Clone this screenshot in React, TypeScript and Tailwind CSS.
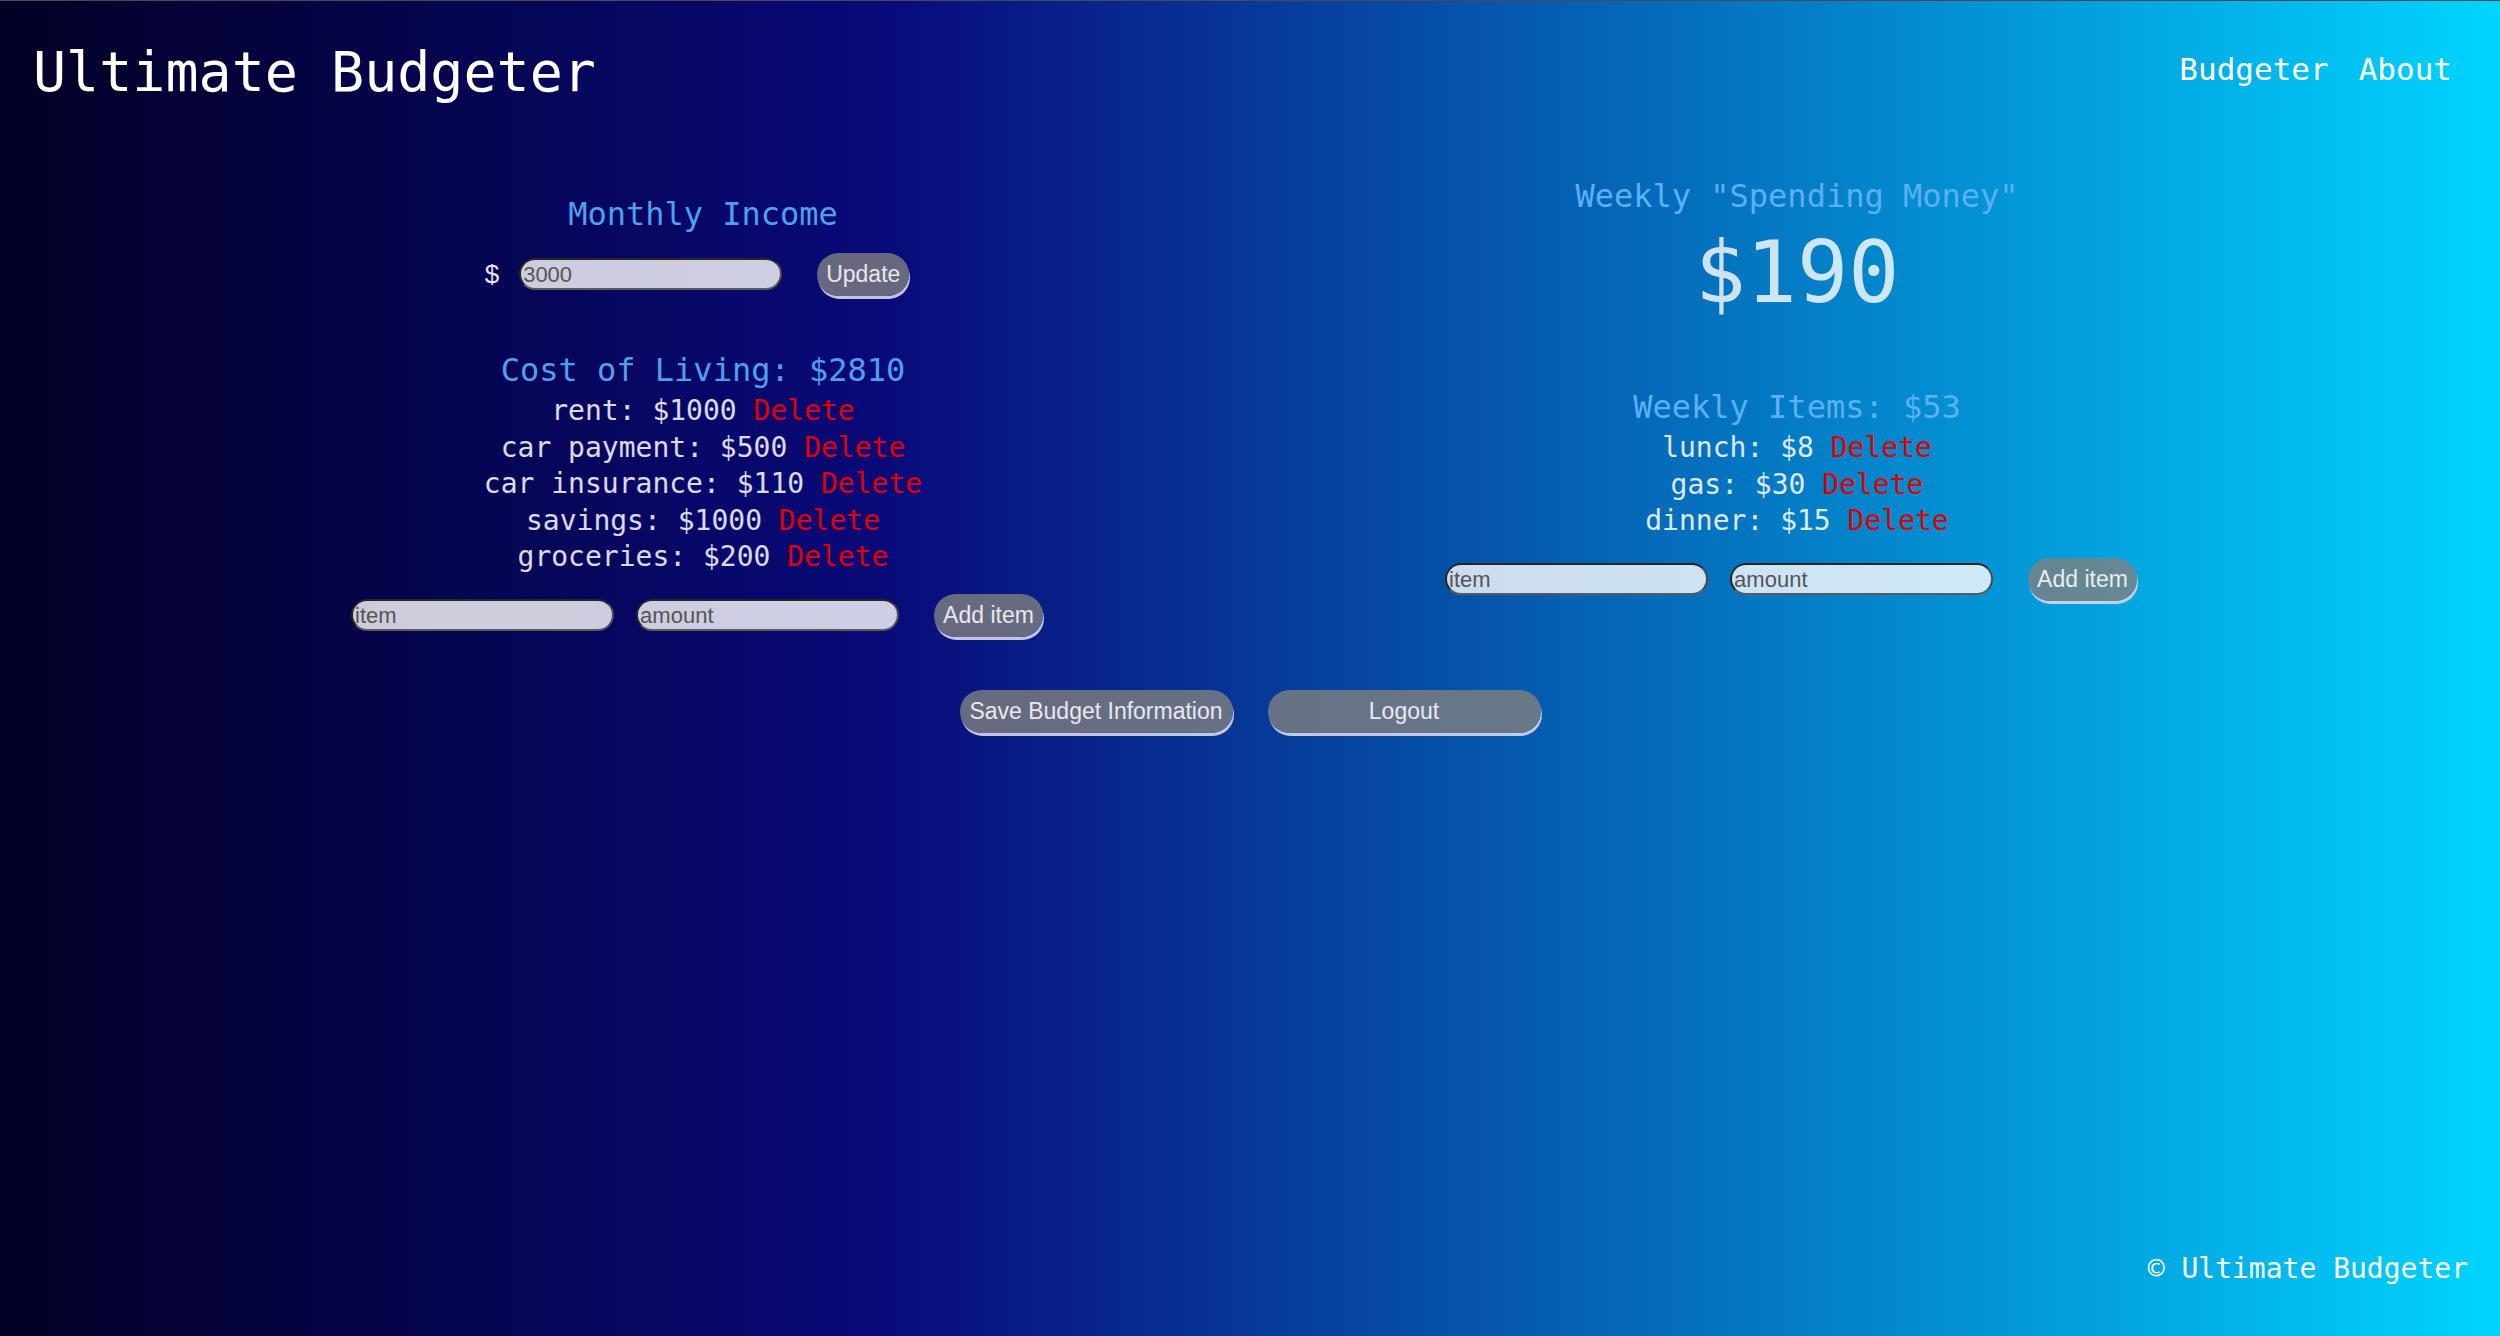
import React from 'react';

const mono = { fontFamily: '"DejaVu Sans Mono", "Liberation Mono", monospace' };
const sans = { fontFamily: '"Liberation Sans", Arial, sans-serif' };

interface Item {
  name: string;
  amount: number;
}

const costs: Item[] = [
  { name: 'rent', amount: 1000 },
  { name: 'car payment', amount: 500 },
  { name: 'car insurance', amount: 110 },
  { name: 'savings', amount: 1000 },
  { name: 'groceries', amount: 200 },
];

const weekly: Item[] = [
  { name: 'lunch', amount: 8 },
  { name: 'gas', amount: 30 },
  { name: 'dinner', amount: 15 },
];

const Field: React.FC<{ placeholder?: string; value?: string }> = ({ placeholder, value }) => (
  <input
    style={sans}
    readOnly
    placeholder={placeholder}
    value={value}
    className="w-[263px] h-[32px] rounded-full bg-white/80 pl-[2px] text-[22px] text-[#555] placeholder:text-[#555] border-2 border-[#262626] border-b-[#5a5a5a] border-r-[#4a4a4a] outline-none"
  />
);

const Btn: React.FC<{ children: React.ReactNode; className?: string }> = ({ children, className = '' }) => (
  <button
    style={sans}
    className={`h-[43px] rounded-full bg-[#808080]/80 px-[9px] text-[23px] text-white/85 shadow-[1px_3px_0_0_rgba(215,215,240,0.9)] ${className}`}
  >
    {children}
  </button>
);

const ItemList: React.FC<{ items: Item[] }> = ({ items }) => (
  <ul className="mt-[3px] text-[28px] leading-[36.6px] text-white/85">
    {items.map((it) => (
      <li key={it.name}>
        {it.name}: ${it.amount} <span className="text-[#e00000]">Delete</span>
      </li>
    ))}
  </ul>
);

const AddRow: React.FC = () => (
  <div className="mt-[18px] mr-[12px] flex items-center justify-center">
    <Field placeholder="item" />
    <div className="w-[22px]" />
    <Field placeholder="amount" />
    <div className="w-[35px]" />
    <Btn>Add item</Btn>
  </div>
);

export default function App() {
  return (
    <div
      style={mono}
      className="min-h-screen flex flex-col border-t border-[#4a4a55] bg-[linear-gradient(90deg,rgba(2,0,36,1)_0%,rgba(9,9,121,1)_35%,rgba(0,212,255,1)_100%)] text-white"
    >
      <header className="flex items-center justify-between pt-[39px] pl-[33px] pr-[48px]">
        <h1 className="text-[55px] leading-[64px]">Ultimate Budgeter</h1>
        <nav className="flex gap-[30px] text-[31px] leading-[40px] -mt-[6px]">
          <a>Budgeter</a>
          <a>About</a>
        </nav>
      </header>

      <main className="flex px-[156px]">
        <section className="flex-1 flex flex-col items-center text-center pt-[90px]">
          <h2 className="text-[32px] leading-[40px] text-[#4fa0ec]">Monthly Income</h2>
          <div className="mt-[18px] flex items-center h-[44px] mr-[12px]">
            <span style={sans} className="text-[26px] text-white/90 mr-[20px]">$</span>
            <Field value="3000" />
            <div className="w-[35px]" />
            <Btn>Update</Btn>
          </div>
          <h2 className="mt-[54px] text-[32px] leading-[40px] text-[#4fa0ec]">Cost of Living: $2810</h2>
          <ItemList items={costs} />
          <AddRow />
        </section>

        <section className="flex-1 flex flex-col items-center text-center pt-[72px]">
          <h2 className="text-[32px] leading-[40px] text-[#5cb0f5]">Weekly "Spending Money"</h2>
          <div className="mt-[12px] text-[85px] leading-[90px] text-white/80">$190</div>
          <h2 className="mt-[69px] text-[32px] leading-[40px] text-[#5cb0f5]">Weekly Items: $53</h2>
          <ItemList items={weekly} />
          <AddRow />
        </section>
      </main>

      <div className="mt-[53px] flex justify-center gap-[35px]">
        <Btn className="w-[273px]">Save Budget Information</Btn>
        <Btn className="w-[273px]">Logout</Btn>
      </div>

      <div className="flex-1" />

      <footer className="flex justify-end pr-[32px] pb-[49px] text-[28px] leading-[36px]">
        © Ultimate Budgeter
      </footer>
    </div>
  );
}
